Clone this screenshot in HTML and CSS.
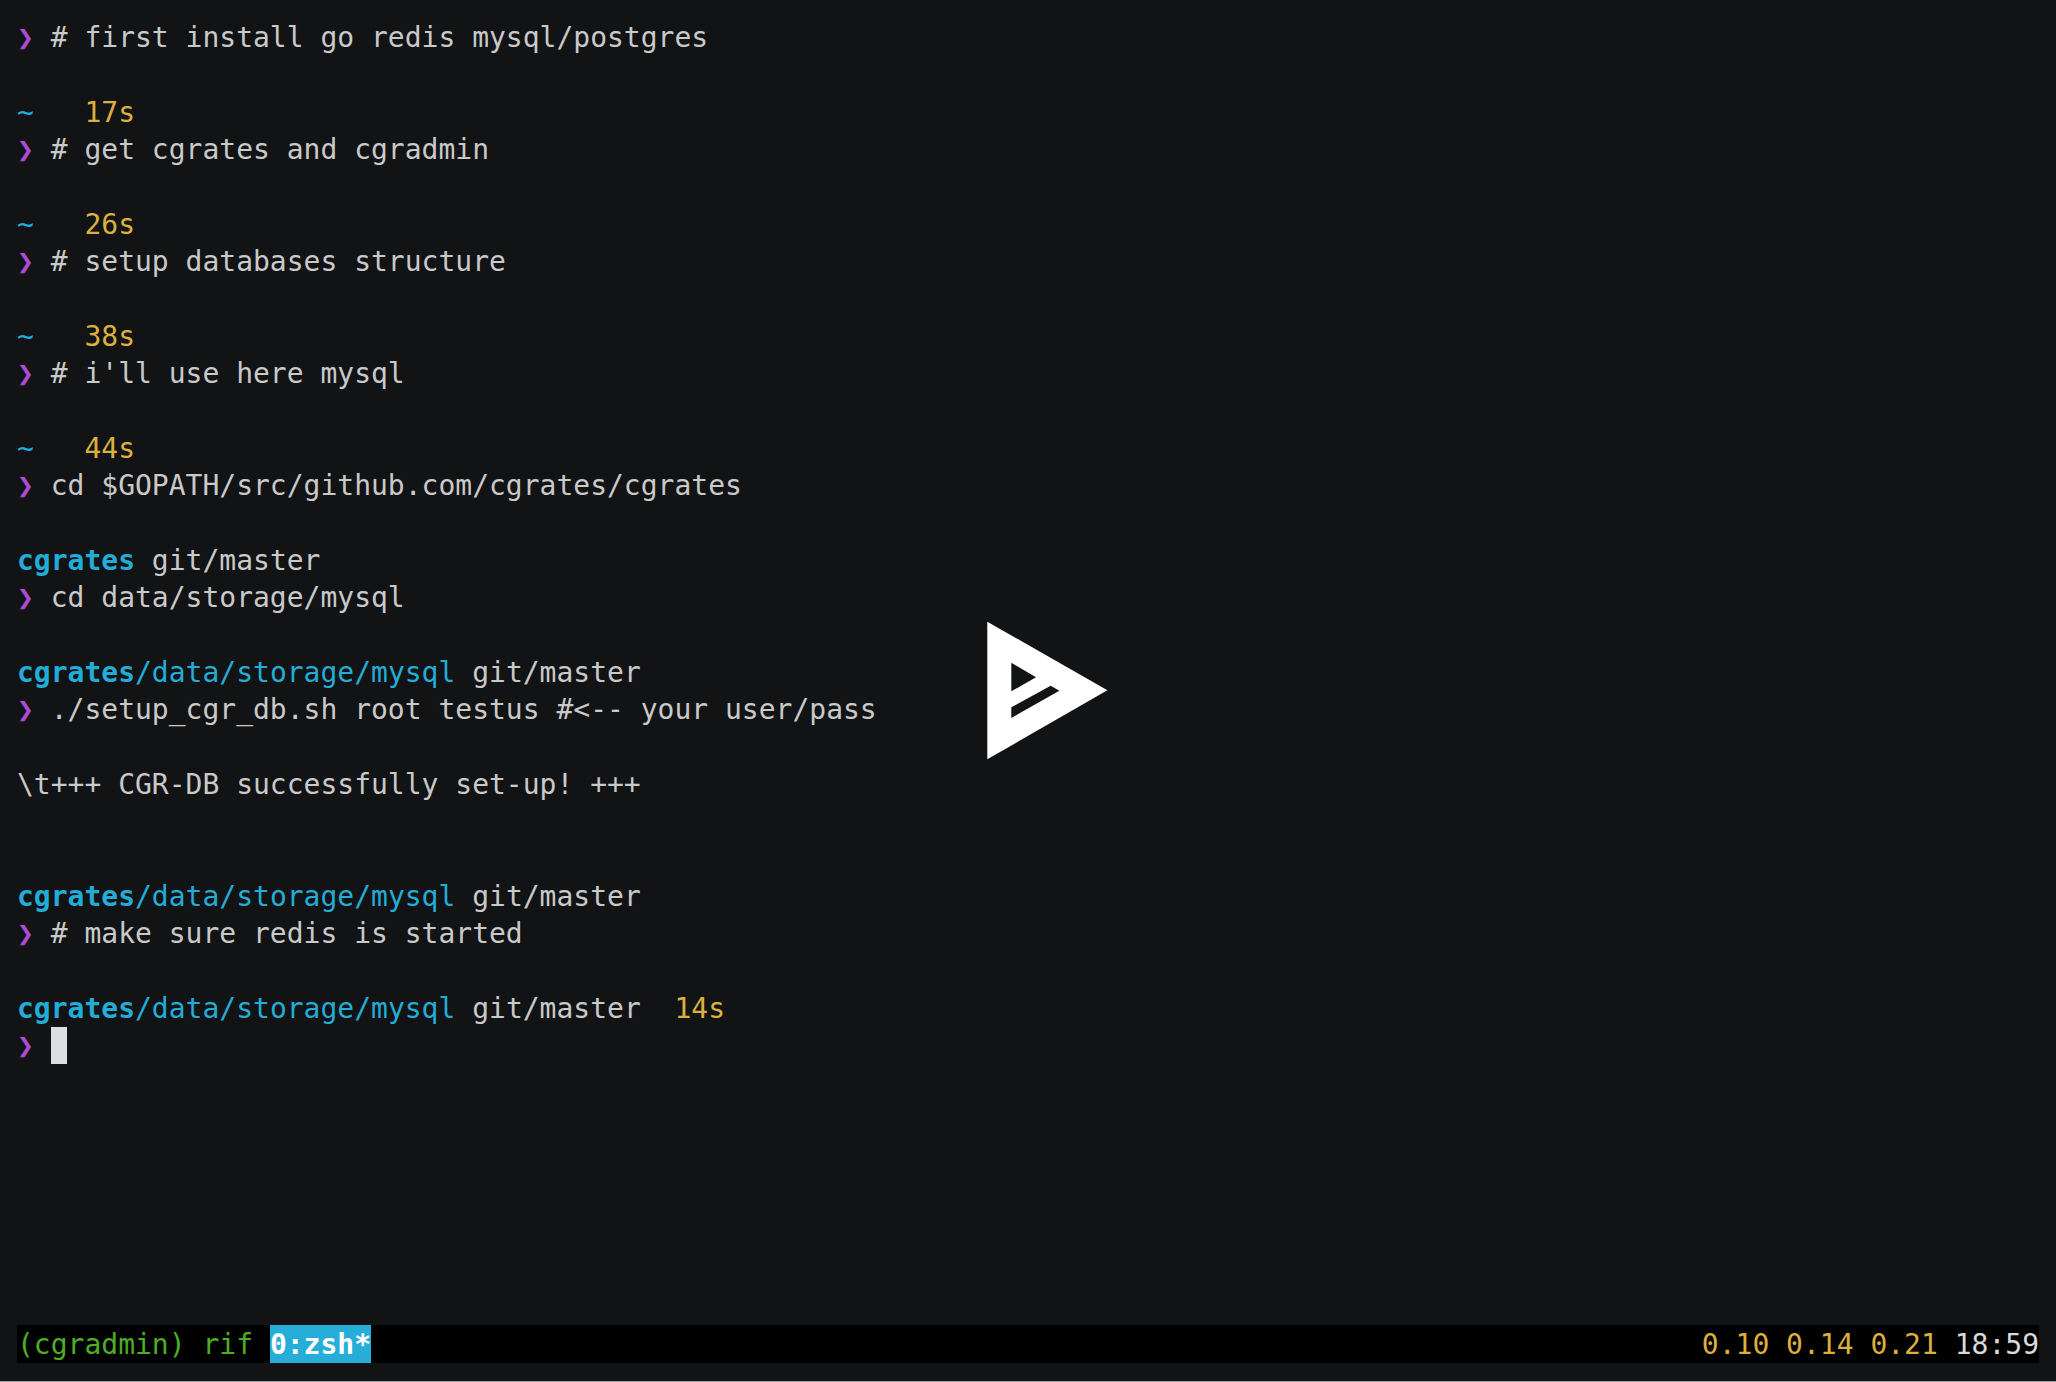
FILE: index.html
```html
<!DOCTYPE html>
<html lang="en">
<head>
<meta charset="utf-8">
<title>asciinema player</title>
<link rel="stylesheet" href="styles.css">
</head>
<body>
<main class="player">
<div class="term">
<div class="line"><span class="mag">❯</span> # first install go redis mysql/postgres</div>
<div class="line"></div>
<div class="line"><span class="blue">~</span>   <span class="yel">17s</span></div>
<div class="line"><span class="mag">❯</span> # get cgrates and cgradmin</div>
<div class="line"></div>
<div class="line"><span class="blue">~</span>   <span class="yel">26s</span></div>
<div class="line"><span class="mag">❯</span> # setup databases structure</div>
<div class="line"></div>
<div class="line"><span class="blue">~</span>   <span class="yel">38s</span></div>
<div class="line"><span class="mag">❯</span> # i'll use here mysql</div>
<div class="line"></div>
<div class="line"><span class="blue">~</span>   <span class="yel">44s</span></div>
<div class="line"><span class="mag">❯</span> cd $GOPATH/src/github.com/cgrates/cgrates</div>
<div class="line"></div>
<div class="line"><span class="blue bold">cgrates</span> git/master</div>
<div class="line"><span class="mag">❯</span> cd data/storage/mysql</div>
<div class="line"></div>
<div class="line"><span class="blue bold">cgrates</span><span class="blue">/data/storage/mysql</span> git/master</div>
<div class="line"><span class="mag">❯</span> ./setup_cgr_db.sh root testus #&lt;-- your user/pass</div>
<div class="line"></div>
<div class="line">\t+++ CGR-DB successfully set-up! +++</div>
<div class="line"></div>
<div class="line"></div>
<div class="line"><span class="blue bold">cgrates</span><span class="blue">/data/storage/mysql</span> git/master</div>
<div class="line"><span class="mag">❯</span> # make sure redis is started</div>
<div class="line"></div>
<div class="line"><span class="blue bold">cgrates</span><span class="blue">/data/storage/mysql</span> git/master  <span class="yel">14s</span></div>
<div class="line"><span class="mag">❯</span> <span class="cursor"></span></div>
<div class="line"></div>
<div class="line"></div>
<div class="line"></div>
<div class="line"></div>
<div class="line"></div>
<div class="line"></div>
<div class="line"></div>
<div class="line status">
<div class="status-left"><span class="grn">(cgradmin) rif </span><span class="active">0:zsh*</span></div>
<div class="status-right"><span class="yel">0.10 0.14 0.21</span> 18:59</div>
</div>
</div>
<svg class="logo" viewBox="0 0 122 140" width="122" height="140" aria-label="Play">
<path fill="#fff" fill-rule="evenodd" d="M1.3 1.7 121.4 70.3 1.3 139.3ZM25.3 42.7V71.3L50 57.3ZM25.3 87.3V98L73.300 70.700 64.700 65.700Z"/>
</svg>
</main>
</body>
</html>
```
FILE: styles.css
```css
html, body {
  margin: 0;
  height: 100%;
  background: #111315;
}
.player {
  position: relative;
  height: 1382px;
  box-sizing: border-box;
  padding: 19px 17px 0;
  overflow: hidden;
  background: #111315;
  color: #c9c9c9;
  font-family: "DejaVu Sans Mono", "Liberation Mono", monospace;
  font-size: 28px;
  border-bottom: 1px solid #a0a0a0;
}
.term {
  width: 2022px;
}
.line {
  height: 37.33px;
  line-height: 37.33px;
  white-space: pre;
}
.mag { color: #b04ad6; }
.blue { color: #24acd6; }
.yel { color: #dcb03c; }
.grn { color: #4cae24; }
.bold { font-weight: bold; }
.cursor {
  display: inline-block;
  width: 16px;
  height: 37.33px;
  vertical-align: top;
  background: #dcdfe1;
}
.line.status {
  display: flex;
  justify-content: space-between;
  height: 37px;
  padding-top: 1px;
  line-height: 37px;
  background: #000;
  color: #d9d9d9;
}
.status-left {
  display: flex;
}
.active {
  margin-top: -1px;
  padding-top: 1px;
  background: #26aed8;
  color: #fff;
  font-weight: bold;
}
.logo {
  position: absolute;
  left: 986px;
  top: 620px;
}
```
